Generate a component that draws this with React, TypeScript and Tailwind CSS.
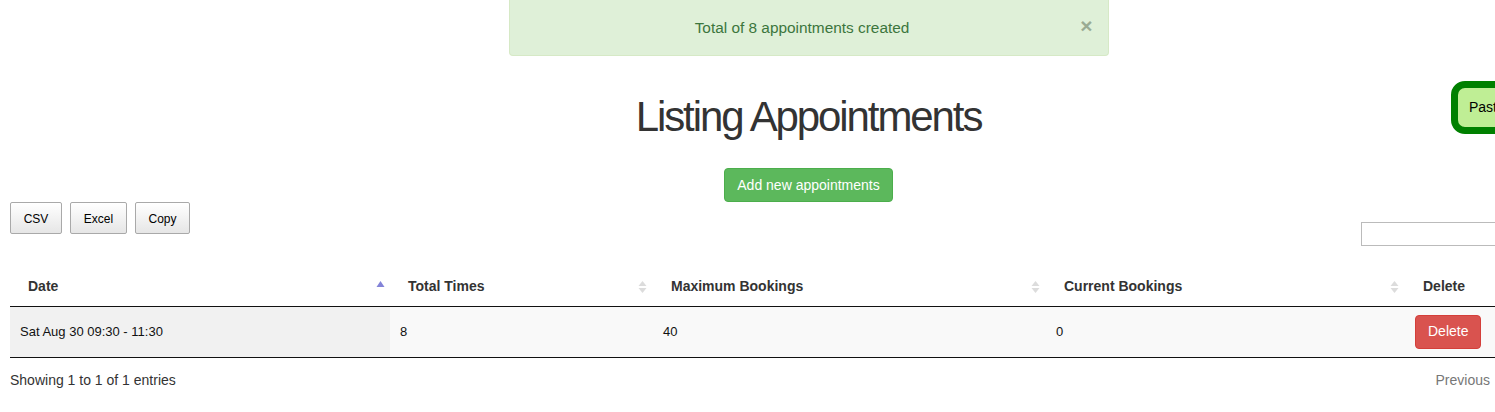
import React from 'react'

const SortIcon = ({ active }: { active?: boolean }) => {
    if (active) {
        return (
            <svg width="9" height="10" viewBox="0 0 9 10" className="absolute right-[5px] top-[14px]">
                <path d="M4.5 1 L8.5 7 L0.5 7 Z" fill="#8383d8" />
            </svg>
        )
    }
    return (
        <svg width="9" height="12" viewBox="0 0 9 12" className="absolute right-[6px] top-[15px]">
            <path d="M4.5 0 L8.5 5 L0.5 5 Z" fill="#dcdcdc" />
            <path d="M4.5 12 L8.5 7 L0.5 7 Z" fill="#dcdcdc" />
        </svg>
    )
}

const columns = [
    { label: 'Date', width: 380, sort: 'asc' },
    { label: 'Total Times', width: 263, sort: 'both' },
    { label: 'Maximum Bookings', width: 393, sort: 'both' },
    { label: 'Current Bookings', width: 359, sort: 'both' },
    { label: 'Delete', width: 202, sort: 'none' },
]

const exportButtons = [
    { label: 'CSV', cls: 'w-[52px]' },
    { label: 'Excel', cls: 'w-[57px]' },
    { label: 'Copy', cls: 'w-[55px]' },
]

export default function App() {
    return (
        <div className="w-[1495px] h-[412px] overflow-hidden bg-white relative" style={{ fontFamily: '"Liberation Sans", Arial, sans-serif' }}>
            <div className="w-[1617px] px-[10px]">
                {/* Flash message */}
                <div className="flex justify-center">
                    <div className="relative w-[600px] h-[56px] bg-[#dff0d8] border border-t-0 border-[#d6e9c6] rounded-b-[4px] flex items-center justify-center pr-[13px] text-[15.4px] text-[#3c763d]">
                        Total of 8 appointments created
                        <span className="absolute right-[15px] top-[16px] text-[21px] font-bold leading-[20px] text-[#9aab93]">×</span>
                    </div>
                </div>

                <h1 className="mt-[38px] text-center text-[42px] leading-[46px] tracking-[-2.1px] text-[#333] font-normal">
                    Listing Appointments
                </h1>

                <div className="flex justify-center mt-[28px]">
                    <button className="h-[34px] px-[12px] bg-[#5cb85c] border border-[#4cae4c] rounded-[4px] text-white text-[14px]">
                        Add new appointments
                    </button>
                </div>

                {/* Toolbar */}
                <div className="flex justify-between items-start">
                    <div className="flex gap-[8px]">
                        {exportButtons.map((b) => (
                            <button
                                key={b.label}
                                className={`${b.cls} h-[32px] pt-[1px] border border-[#a9a9a9] rounded-[2px] text-[12px] text-black bg-gradient-to-b from-[#ffffff] to-[#e6e6e6]`}
                            >
                                {b.label}
                            </button>
                        ))}
                    </div>
                    <input className="mt-[20px] w-[246px] h-[24px] border border-[#bbbbbb] outline-none" />
                </div>

                {/* Table */}
                <table className="mt-[20px] border-collapse table-fixed w-[1597px] text-[13px]">
                    <colgroup>
                        {columns.map((c) => (
                            <col key={c.label} style={{ width: c.width }} />
                        ))}
                    </colgroup>
                    <thead>
                        <tr className="border-b border-[#111]">
                            {columns.map((c) => (
                                <th key={c.label} className="relative text-left font-bold text-[14px] text-[#333] pl-[18px] pr-[18px] pt-[2px] h-[40px]">
                                    {c.label}
                                    {c.sort === 'asc' && <SortIcon active />}
                                    {c.sort === 'both' && <SortIcon />}
                                </th>
                            ))}
                        </tr>
                    </thead>
                    <tbody>
                        <tr className="bg-[#f9f9f9] border-b border-[#111] h-[51px] text-[#111]">
                            <td className="bg-[#f1f1f1] px-[10px]">Sat Aug 30 09:30 - 11:30</td>
                            <td className="px-[10px]">8</td>
                            <td className="px-[10px]">40</td>
                            <td className="px-[10px]">0</td>
                            <td className="px-[10px]">
                                <button className="h-[34px] px-[12px] bg-[#d9534f] border border-[#d43f3a] rounded-[4px] text-white text-[14px]">
                                    Delete
                                </button>
                            </td>
                        </tr>
                    </tbody>
                </table>

                <div className="flex justify-between mt-[12px] w-[1480px] text-[14px] text-[#333]">
                    <span>Showing 1 to 1 of 1 entries</span>
                    <span className="text-[#777]">Previous</span>
                </div>
            </div>

            {/* Floating filter button */}
            <div className="absolute left-[1451px] top-[81px] h-[53px] border-[7px] border-[#008000] rounded-[14px] bg-[#bfee95] pl-[11px] pr-[14px] flex items-center text-[14px] text-black">
                Past
            </div>
        </div>
    )
}
